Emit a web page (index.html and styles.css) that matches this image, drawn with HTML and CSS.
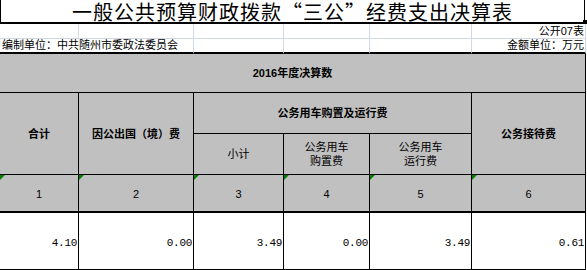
FILE: index.html
```html
<!DOCTYPE html>
<html lang="zh-CN">
<head>
<meta charset="utf-8">
<title>一般公共预算财政拨款“三公”经费支出决算表</title>
<link rel="stylesheet" href="styles.css">
</head>
<body>
<div class="sheet">
  <div class="title">一般公共预算财政拨款“三公”经费支出决算表</div>
  <div class="meta">
    <div class="m"></div><div class="m"></div><div class="m"></div><div class="m"></div><div class="m"></div>
    <div class="m right">公开07表</div>
    <div class="m last span2 left">编制单位：中共随州市委政法委员会</div>
    <div class="m last"></div><div class="m last"></div><div class="m last"></div>
    <div class="m last right">金额单位：万元</div>
  </div>
  <div class="grid">
    <div class="c head year">2016年度决算数</div>
    <div class="c head tall c1">合计</div>
    <div class="c head tall c2">因公出国（境）费</div>
    <div class="c head group">公务用车购置及运行费</div>
    <div class="c head tall c6">公务接待费</div>
    <div class="c sub">小计</div>
    <div class="c sub">公务用车<br>购置费</div>
    <div class="c sub">公务用车<br>运行费</div>
    <div class="c idx">1</div>
    <div class="c idx">2</div>
    <div class="c idx">3</div>
    <div class="c idx">4</div>
    <div class="c idx">5</div>
    <div class="c idx">6</div>
    <div class="c val">4.10</div>
    <div class="c val">0.00</div>
    <div class="c val">3.49</div>
    <div class="c val">0.00</div>
    <div class="c val">3.49</div>
    <div class="c val">0.61</div>
  </div>
</div>
</body>
</html>
```
FILE: styles.css
```css
body {
  margin: 0;
  background: #fff;
  font-family: "Liberation Sans", "Noto Sans CJK SC", sans-serif;
  color: #000;
}
.sheet {
  width: 586px;
}
.title {
  position: relative;
  box-sizing: border-box;
  width: 585px;
  height: 24px;
  padding-top: 1px;
  border-left: 1px solid #000;
  border-right: 1px solid #000;
  border-bottom: 2px solid #000;
  font-family: "Noto Sans CJK SC", sans-serif;
  font-size: 20px;
  letter-spacing: 1px;
  line-height: 21px;
  text-align: center;
  white-space: nowrap;
}
.title::after {
  content: "";
  position: absolute;
  right: -3px;
  bottom: -2px;
  width: 4px;
  height: 4px;
  background: #000;
}
.meta {
  display: grid;
  grid-template-columns: 79px 115px 90px 86px 102px 114px;
  grid-template-rows: 15px 15px;
  font-size: 11px;
}
.m {
  box-sizing: border-box;
  border-right: 1px solid #d0d7e5;
  border-bottom: 1px solid #d0d7e5;
  line-height: 13px;
  padding-top: 1px;
  white-space: nowrap;
}
.m.last {
  border-bottom: 2px solid #000;
  padding-top: 0;
}
.m.span2 {
  grid-column: span 2;
}
.m.left {
  padding-left: 2px;
}
.m.right {
  text-align: right;
  padding-right: 1px;
}
.grid {
  display: grid;
  grid-template-columns: 79px 115px 90px 86px 102px 114px;
  grid-template-rows: 39px 41px 41px 38px 57px;
  background: #c0c0c0;
  font-size: 11px;
}
.c {
  position: relative;
  box-sizing: border-box;
  border-right: 1px solid #000;
  border-bottom: 1px solid #000;
  display: flex;
  align-items: center;
  justify-content: center;
  text-align: center;
  line-height: 14px;
}
.head {
  font-weight: bold;
}
.year {
  grid-column: 1 / -1;
}
.tall {
  grid-row: span 2;
}
.group {
  grid-column: span 3;
}
.idx {
  border-bottom: 2px solid #000;
  padding-top: 2px;
}
.idx::before {
  content: "";
  position: absolute;
  top: 0;
  left: 0;
  border-top: 5px solid #008000;
  border-right: 5px solid transparent;
}
.val {
  background: #fff;
  justify-content: flex-end;
  padding-right: 1px;
  padding-top: 3px;
  font-family: "Liberation Mono", monospace;
  font-size: 11px;
  letter-spacing: -0.3px;
}
```
